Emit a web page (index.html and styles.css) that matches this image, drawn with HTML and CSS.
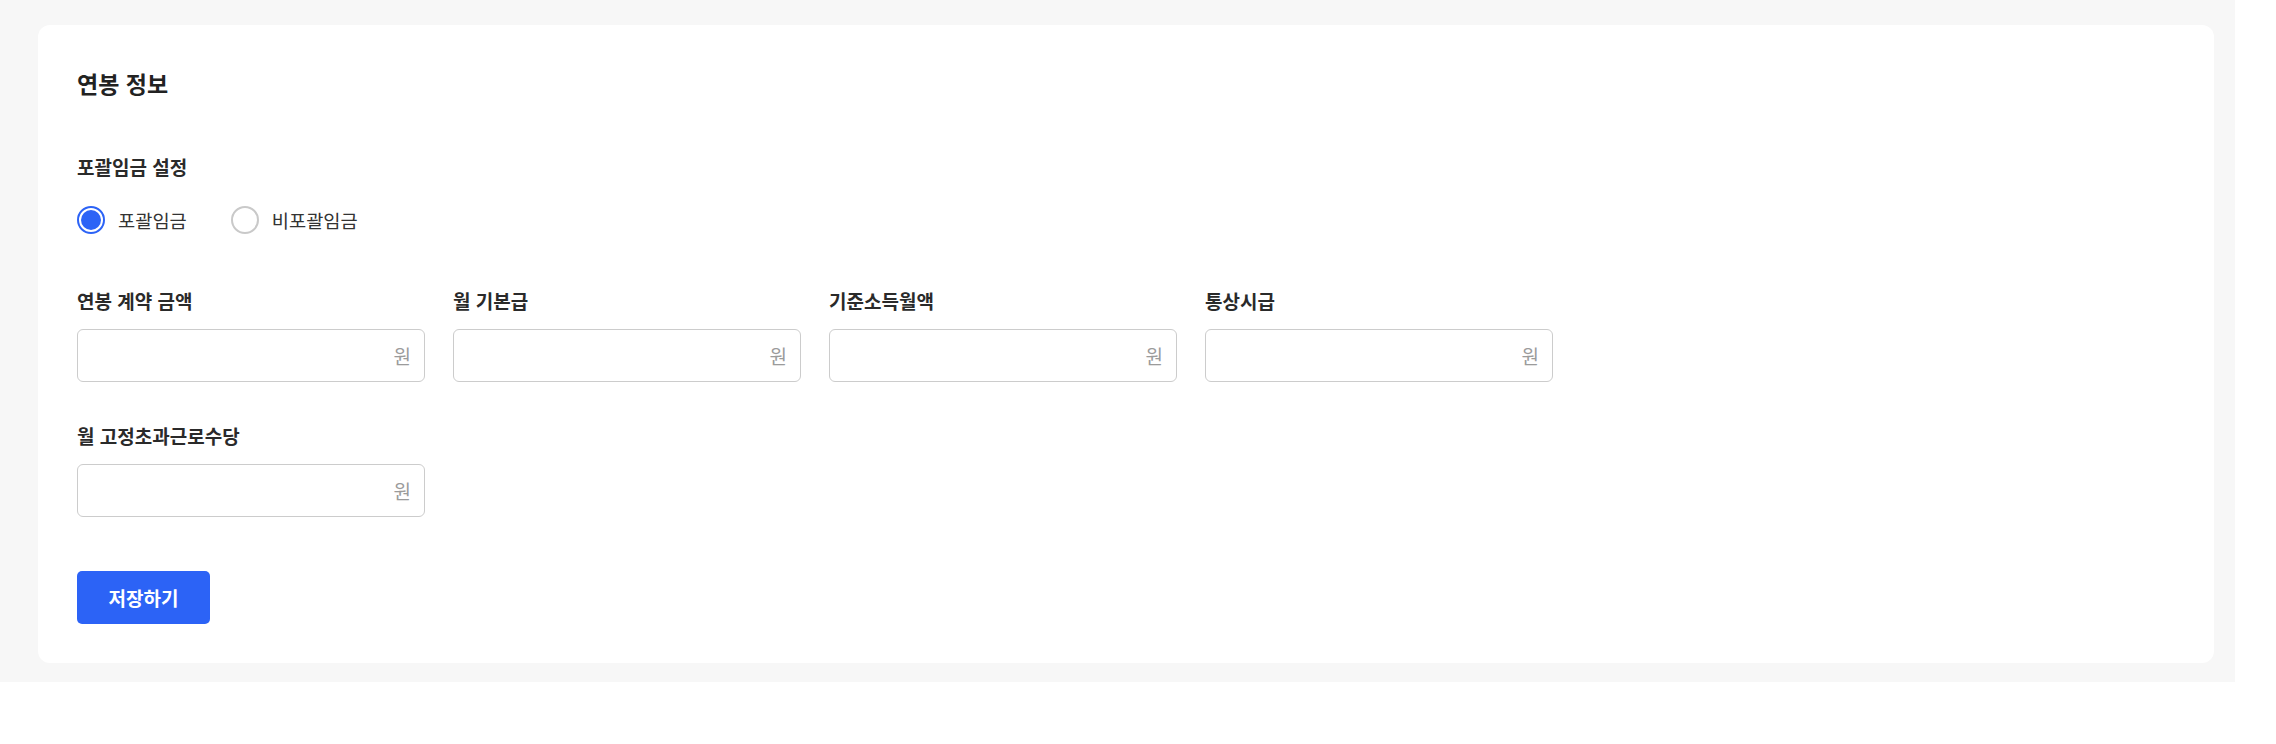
FILE: index.html
```html
<!DOCTYPE html>
<html lang="ko">
<head>
<meta charset="utf-8">
<title>연봉 정보</title>
<link rel="stylesheet" href="styles.css">
</head>
<body>
<div class="page">
  <section class="card">
    <h2 class="title">연봉 정보</h2>

    <div class="section-label">포괄임금 설정</div>
    <div class="radio-group">
      <label class="radio-item">
        <span class="radio checked"></span>
        <span class="radio-text">포괄임금</span>
      </label>
      <label class="radio-item">
        <span class="radio"></span>
        <span class="radio-text">비포괄임금</span>
      </label>
    </div>

    <div class="fields">
      <div class="field">
        <div class="field-label">연봉 계약 금액</div>
        <div class="input"><span class="unit">원</span></div>
      </div>
      <div class="field">
        <div class="field-label">월 기본급</div>
        <div class="input"><span class="unit">원</span></div>
      </div>
      <div class="field">
        <div class="field-label">기준소득월액</div>
        <div class="input"><span class="unit">원</span></div>
      </div>
      <div class="field">
        <div class="field-label">통상시급</div>
        <div class="input"><span class="unit">원</span></div>
      </div>
      <div class="field">
        <div class="field-label">월 고정초과근로수당</div>
        <div class="input"><span class="unit">원</span></div>
      </div>
    </div>

    <button class="save-btn" type="button">저장하기</button>
  </section>
</div>
</body>
</html>
```
FILE: styles.css
```css
* {
  box-sizing: border-box;
}

html, body {
  margin: 0;
  padding: 0;
  background: #ffffff;
}

body {
  font-family: "Noto Sans CJK KR", "Noto Sans", sans-serif;
  color: #222222;
}

.page {
  width: 2235px;
  background: #f7f7f7;
  padding: 25px 21px 19px 38px;
}

.card {
  background: #ffffff;
  border-radius: 12px;
  padding: 42px 40px 40px 39px;
  height: 638px;
}

.title {
  margin: 0;
  font-size: 23px;
  line-height: 32px;
  font-weight: 700;
  color: #222222;
}

.section-label {
  margin-top: 54px;
  font-size: 19px;
  line-height: 28px;
  font-weight: 700;
  color: #2a2a2a;
}

.radio-group {
  display: flex;
  gap: 44px;
  margin-top: 25px;
  height: 28px;
  align-items: center;
}

.radio-item {
  display: flex;
  align-items: center;
  gap: 13px;
}

.radio {
  width: 28px;
  height: 28px;
  border-radius: 50%;
  border: 2.5px solid #c9c9c9;
  background: #ffffff;
  position: relative;
  flex: none;
}

.radio.checked {
  border-color: #2c63f6;
}

.radio.checked::after {
  content: "";
  position: absolute;
  inset: 2px;
  border-radius: 50%;
  background: #2c63f6;
}

.radio-text {
  font-size: 18.7px;
  line-height: 28px;
  color: #333333;
}

.fields {
  display: grid;
  grid-template-columns: repeat(4, 348px);
  column-gap: 28px;
  row-gap: 40px;
  margin-top: 53px;
}

.field-label {
  font-size: 19px;
  line-height: 28px;
  font-weight: 700;
  color: #2a2a2a;
}

.input {
  margin-top: 14px;
  height: 53px;
  border: 1.5px solid #cccccc;
  border-radius: 6px;
  display: flex;
  align-items: center;
  justify-content: flex-end;
  padding: 0 13px;
}

.unit {
  font-size: 19px;
  color: #9b9b9b;
}

.save-btn {
  display: block;
  margin-top: 54px;
  width: 133px;
  height: 53px;
  border: none;
  border-radius: 5px;
  background: #2c63f6;
  color: #ffffff;
  font-family: "Noto Sans CJK KR", "Noto Sans", sans-serif;
  font-size: 19px;
  font-weight: 700;
  padding: 0;
}
```
